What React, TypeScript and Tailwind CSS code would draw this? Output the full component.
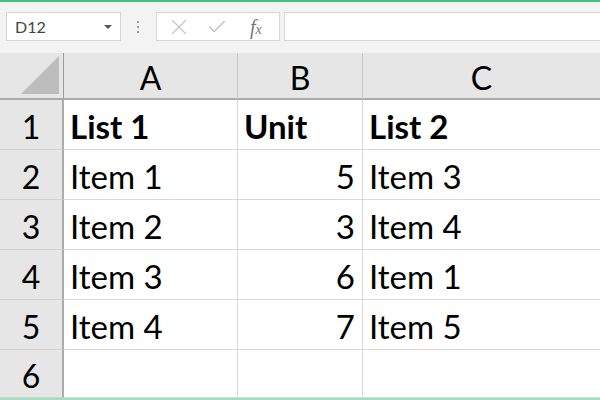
import { Check, X } from 'lucide-react'

const cols = ['A', 'B', 'C']

const rows: { a: string; b: string; c: string; bold?: boolean }[] = [
  { a: 'List 1', b: 'Unit', c: 'List 2', bold: true },
  { a: 'Item 1', b: '5', c: 'Item 3' },
  { a: 'Item 2', b: '3', c: 'Item 4' },
  { a: 'Item 3', b: '6', c: 'Item 1' },
  { a: 'Item 4', b: '7', c: 'Item 5' },
  { a: '', b: '', c: '' },
]

export default function App() {
  return (
    <div className="flex h-[400px] w-[600px] flex-col overflow-hidden bg-white font-['Lato',sans-serif] text-black">
      <div className="h-[2px] shrink-0 bg-[#3fc383]" />

      {/* formula bar */}
      <div className="flex h-[51px] shrink-0 items-center bg-[#f3f3f3] pb-[2px]">
        <div className="ml-[6px] flex h-[29px] w-[115px] items-center justify-between border border-[#d6d6d6] bg-white pr-[8px] pl-[8px]">
          <span className="text-[16px] text-[#444]">D12</span>
          <span className="h-0 w-0 border-x-[4px] border-t-[4px] border-x-transparent border-t-[#555]" />
        </div>
        <div className="ml-[14px] flex w-[6px] flex-col items-center gap-[3px]">
          <span className="h-[2px] w-[2px] bg-[#a0a0a0]" />
          <span className="h-[2px] w-[2px] bg-[#a0a0a0]" />
          <span className="h-[2px] w-[2px] bg-[#a0a0a0]" />
        </div>
        <div className="ml-[15px] flex h-[29px] w-[124px] items-center border border-[#d6d6d6] bg-white">
          <X className="ml-[9px] h-[26px] w-[26px] shrink-0 text-[#c4c4c4]" strokeWidth={1.1} />
          <Check className="ml-[14px] h-[22px] w-[22px] shrink-0 text-[#c4c4c4]" strokeWidth={1.6} />
          <span className="ml-[22px] font-['Liberation_Serif',serif] text-[20px] leading-none text-[#777] italic">
            f<span className="text-[14px]">x</span>
          </span>
        </div>
        <div className="ml-[4px] h-[29px] flex-1 border border-r-0 border-[#d6d6d6] bg-white" />
      </div>

      {/* grid */}
      <div className="grid shrink-0 grid-cols-[64px_174px_125px_1fr] grid-rows-[47px_repeat(5,50px)_48px]">
        <div className="flex items-end justify-end border-r border-b-2 border-r-[#9c9c9c] border-b-[#ababab] bg-[#e6e6e6] pr-[4px] pb-[4px]">
          <div className="h-[38px] w-[38px] bg-[#bdbdbd] [clip-path:polygon(100%_0,100%_100%,0_100%)]" />
        </div>
        {cols.map((c, i) => (
          <div
            key={c}
            className={`flex items-center justify-center border-b-2 border-b-[#ababab] bg-[#e6e6e6] pt-[4px] text-[32px] ${
              i < 2 ? 'border-r border-r-[#c8c8c8]' : ''
            }`}
          >
            {c}
          </div>
        ))}

        {rows.map((r, i) => (
          <div key={i} className="contents">
            <div className="flex items-center justify-center border-r-2 border-b border-r-[#ababab] border-b-[#d2d2d2] bg-[#e6e6e6] pt-[4px] text-[32px]">
              {i + 1}
            </div>
            <div
              className={`flex items-center border-r border-b border-[#d9d9d9] pt-[4px] pl-[6px] text-[33px] ${
                r.bold ? 'font-bold' : ''
              }`}
            >
              {r.a}
            </div>
            <div
              className={`flex items-center border-r border-b border-[#d9d9d9] pt-[4px] text-[33px] ${
                r.bold ? 'justify-start pl-[6px] font-bold' : 'justify-end pr-[7px]'
              }`}
            >
              {r.b}
            </div>
            <div
              className={`flex items-center border-b border-[#d9d9d9] pt-[4px] pl-[6px] text-[33px] ${
                r.bold ? 'font-bold' : ''
              }`}
            >
              {r.c}
            </div>
          </div>
        ))}
      </div>
      <div className="h-[2px] shrink-0 bg-[#9fe0bf]" />
    </div>
  )
}
